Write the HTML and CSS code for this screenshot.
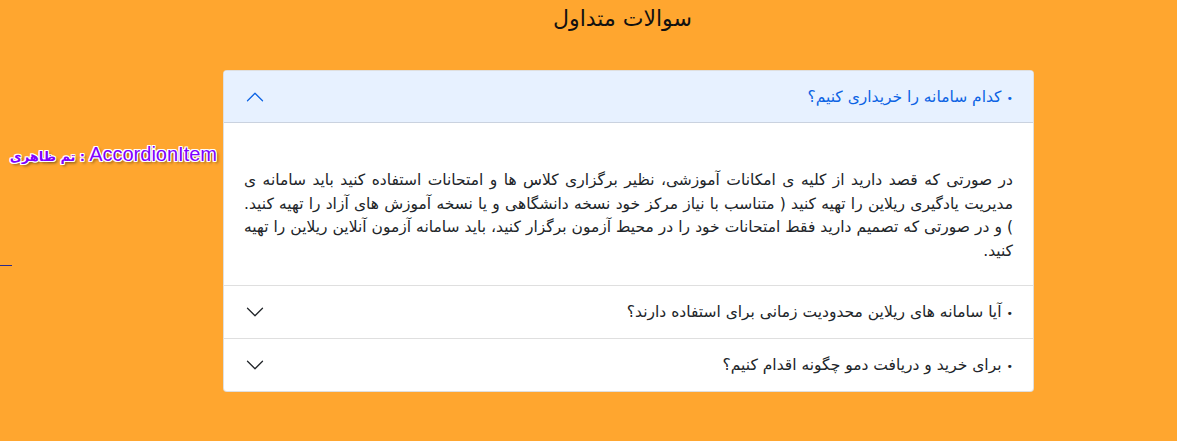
FILE: index.html
```html
<!DOCTYPE html>
<html lang="fa">
<head>
<meta charset="utf-8">
<title>سوالات متداول</title>
<link rel="stylesheet" href="styles.css">
</head>
<body>
<div class="page">
  <aside class="side">
    <div class="tag" dir="rtl">AccordionItem<span class="fa"> : تم ظاهری</span></div>
    <div class="rule"></div>
  </aside>
  <main class="main">
    <h1 class="title" dir="rtl">سوالات متداول</h1>
    <div class="accordion" dir="rtl">
      <div class="item">
        <div class="head active">
          <span class="q"><span class="dot">•</span>کدام سامانه را خریداری کنیم؟</span>
          <svg class="chev up" viewBox="0 0 16 16" width="20" height="20"><path fill="currentColor" fill-rule="evenodd" d="M1.646 4.646a.5.5 0 0 1 .708 0L8 10.293l5.646-5.647a.5.5 0 0 1 .708.708l-6 6a.5.5 0 0 1-.708 0l-6-6a.5.5 0 0 1 0-.708z"/></svg>
        </div>
        <div class="body">
          <p>در صورتی که قصد دارید از کلیه ی امکانات آموزشی، نظیر برگزاری کلاس ها و امتحانات استفاده کنید باید سامانه ی مدیریت یادگیری ریلاین را تهیه کنید ( متناسب با نیاز مرکز خود نسخه دانشگاهی و یا نسخه آموزش های آزاد را تهیه کنید. ) و در صورتی که تصمیم دارید فقط امتحانات خود را در محیط آزمون برگزار کنید، باید سامانه آزمون آنلاین ریلاین را تهیه کنید.</p>
        </div>
      </div>
      <div class="item">
        <div class="head">
          <span class="q"><span class="dot">•</span>آیا سامانه های ریلاین محدودیت زمانی برای استفاده دارند؟</span>
          <svg class="chev" viewBox="0 0 16 16" width="20" height="20"><path fill="currentColor" fill-rule="evenodd" d="M1.646 4.646a.5.5 0 0 1 .708 0L8 10.293l5.646-5.647a.5.5 0 0 1 .708.708l-6 6a.5.5 0 0 1-.708 0l-6-6a.5.5 0 0 1 0-.708z"/></svg>
        </div>
      </div>
      <div class="item last">
        <div class="head">
          <span class="q"><span class="dot">•</span>برای خرید و دریافت دمو چگونه اقدام کنیم؟</span>
          <svg class="chev" viewBox="0 0 16 16" width="20" height="20"><path fill="currentColor" fill-rule="evenodd" d="M1.646 4.646a.5.5 0 0 1 .708 0L8 10.293l5.646-5.647a.5.5 0 0 1 .708.708l-6 6a.5.5 0 0 1-.708 0l-6-6a.5.5 0 0 1 0-.708z"/></svg>
        </div>
      </div>
    </div>
  </main>
</div>
</body>
</html>
```
FILE: styles.css
```css
html, body {
  margin: 0;
  padding: 0;
}
body {
  background: #ffa62f;
  font-family: "DejaVu Sans", "Noto Sans", sans-serif;
  color: #212529;
  height: 441px;
  overflow: hidden;
}
.page {
  display: flex;
  align-items: flex-start;
}
.side {
  width: 223px;
  flex: none;
  display: flex;
  flex-direction: column;
  padding-top: 140px;
}
.tag {
  font-family: "Liberation Sans", Arial, sans-serif;
  font-size: 20px;
  line-height: 28px;
  color: #8000ff;
  text-align: right;
  white-space: nowrap;
  padding-right: 6px;
  text-shadow:
    1px 0 0 #fff, -1px 0 0 #fff, 0 1px 0 #fff, 0 -1px 0 #fff,
    1px 1px 0 #fff, -1px -1px 0 #fff, 1px -1px 0 #fff, -1px 1px 0 #fff,
    2px 2px 3px rgba(0,0,0,.55);
}
.tag .fa {
  font-family: "DejaVu Sans", sans-serif;
  font-size: 13px;
  font-weight: bold;
  letter-spacing: -0.2px;
}
.rule {
  width: 12px;
  height: 1px;
  background: #2b2b8c;
  margin-top: 94px;
}
.main {
  width: 811px;
  flex: none;
}
.title {
  margin: 3px 0 0;
  padding-right: 12px;
  font-size: 22px;
  font-weight: normal;
  line-height: 32px;
  text-align: center;
  color: #111;
  height: 67px;
}
.accordion {
  background: #fff;
  border: 1px solid rgba(0,0,0,.125);
  border-radius: 4px;
  overflow: hidden;
}
.item + .item {
  border-top: 1px solid rgba(0,0,0,.125);
}
.head {
  display: flex;
  align-items: center;
  justify-content: space-between;
  height: 52px;
  padding: 0 20px 0 20px;
  font-size: 15.5px;
  color: #212529;
}
.head.active {
  background: #e7f1ff;
  color: #0c63e4;
  box-shadow: inset 0 -1px 0 rgba(0,0,0,.125);
}
.dot {
  font-size: 11px;
  margin-left: 5px;
}
.chev {
  color: #212529;
  margin-left: 1px;
}
.chev.up {
  color: #0c63e4;
  transform: rotate(180deg);
}
.body {
  padding: 46px 20px 22px;
}
.body p {
  margin: 0;
  font-size: 15.5px;
  line-height: 23.5px;
  text-align: justify;
}
```
